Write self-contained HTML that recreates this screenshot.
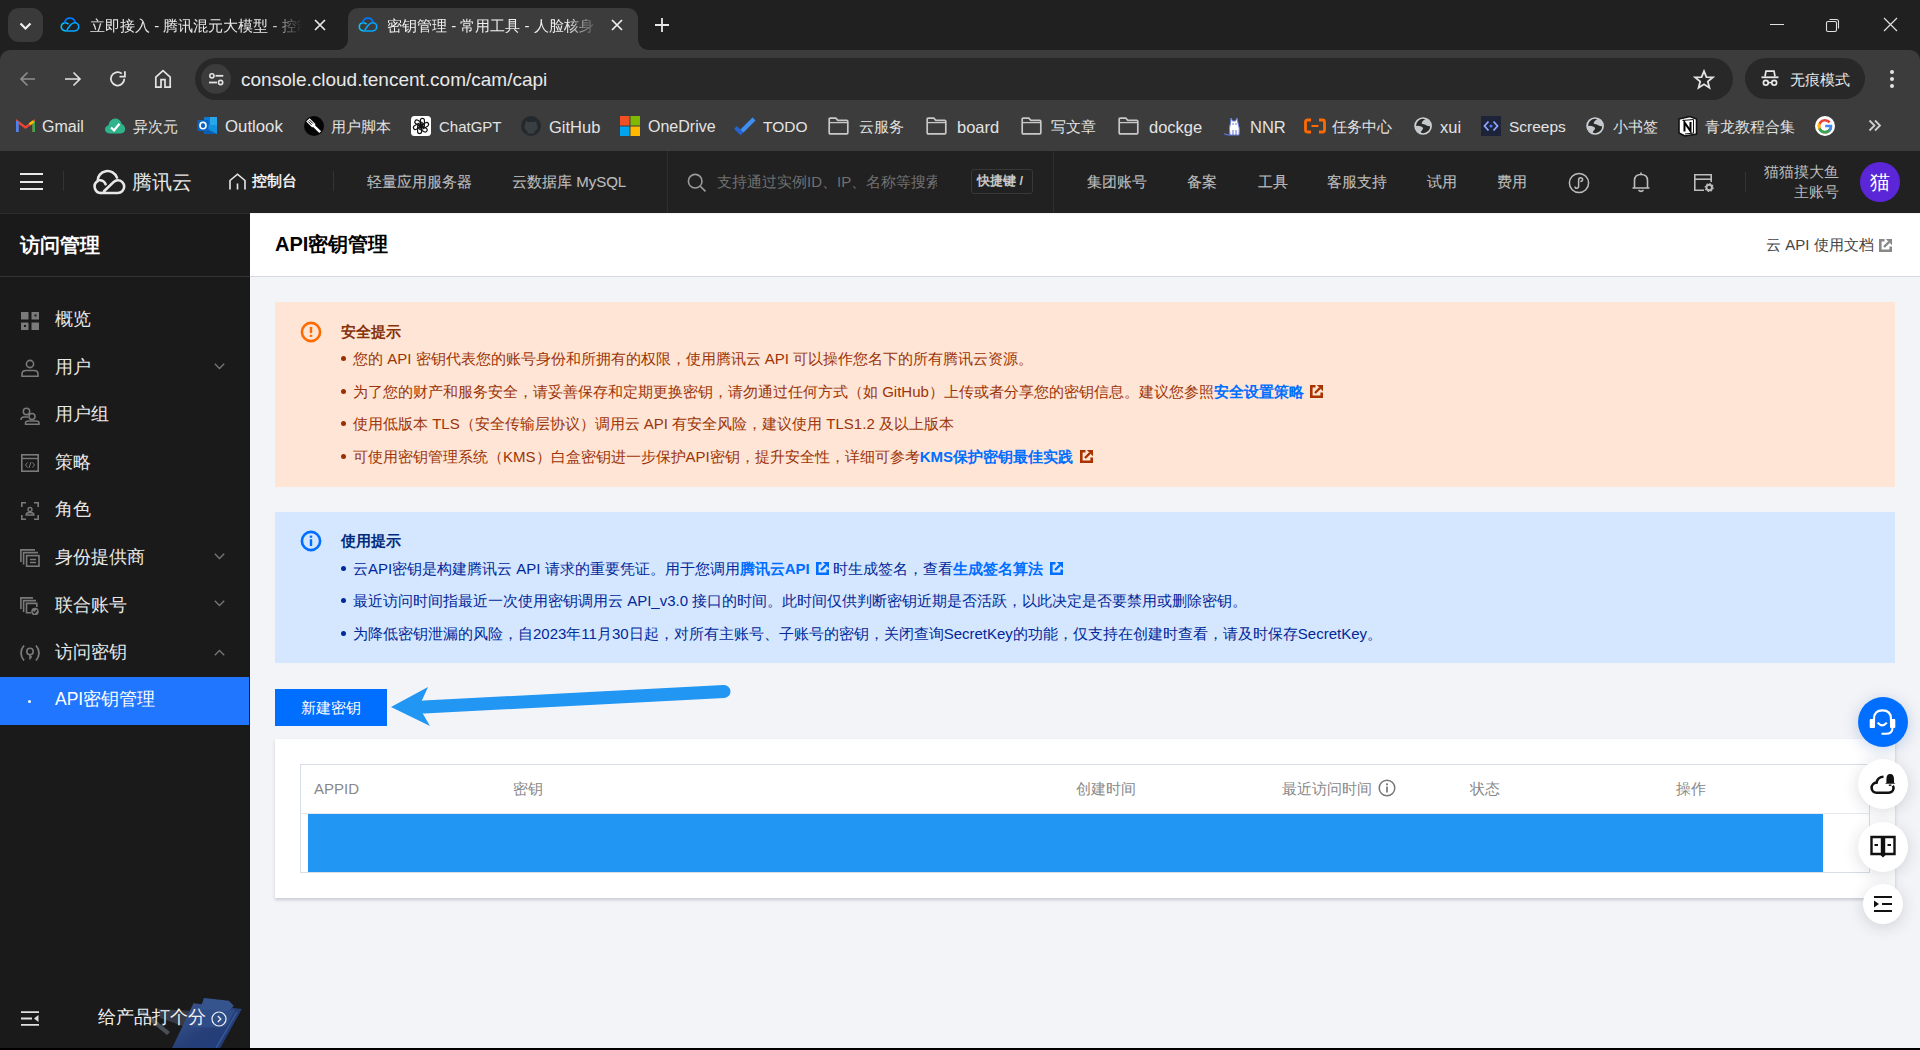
<!DOCTYPE html>
<html><head><meta charset="utf-8">
<style>
*{box-sizing:border-box;margin:0;padding:0}
html,body{width:1920px;height:1050px;overflow:hidden;background:#202020;font-family:"Liberation Sans",sans-serif}
.a{position:absolute}
.t{position:absolute;white-space:nowrap;line-height:1}
.bm{color:#e3e3e3;font-size:15px;top:119px}
.hn{color:#bcbcbc;font-size:15px;top:173.5px;-webkit-text-stroke:.12px #bcbcbc}
.mi{color:#e8e8e8;font-size:17.5px;left:55px}
.wt{color:#9c3408;font-size:15px;left:353px}
.it{color:#00289a;font-size:15px;left:353px}
.lk{color:#006eff;font-weight:bold}
.th{color:#888;font-size:15px;top:781px}
.fb{width:50px;height:50px;border-radius:50%;background:#fff;box-shadow:0 3px 16px rgba(30,40,60,.16)}
.wb{left:341px;width:5px;height:5px;border-radius:50%;background:#9a3000}
.ib{left:341px;width:5px;height:5px;border-radius:50%;background:#002a9a}
</style></head><body>
<!-- ===== browser tab strip ===== -->
<div class="a" style="left:0;top:0;width:1920px;height:50px;background:#202020"></div>
<div class="a" style="left:8px;top:8px;width:35px;height:34px;background:#3a3a3a;border-radius:11px"></div>
<svg class="a" style="left:17px;top:17px" width="17" height="17" viewBox="0 0 17 17"><path d="M3.5 6.5 L8.5 11.5 L13.5 6.5" fill="none" stroke="#f0f0f0" stroke-width="2.2"/></svg>
<!-- tab1 -->
<svg class="a" style="left:59px;top:16px" width="22" height="18" viewBox="-1 -.8 24 19.6"><path d="M6.5 15.5 C3.5 15.5 1.5 13.5 1.5 11 C1.5 8.5 3.5 6.5 6 6.5 C7.5 6.5 8.5 7.2 9.3 8" fill="none" stroke="#00c8ff" stroke-width="1.8"/><path d="M5 7 C5.5 3.5 8 1.5 11 1.5 C13.8 1.5 16 3.3 16.7 6" fill="none" stroke="#0077ff" stroke-width="1.8"/><path d="M6.5 15.5 L16 15.5 C18.5 15.5 20.5 13.5 20.5 11 C20.5 8.5 18.5 6.5 16 6.5 C14 6.5 12.8 7.5 11.5 9 L7.5 14.5" fill="none" stroke="#00a8ff" stroke-width="1.8"/></svg>
<div class="t" style="left:90px;top:18px;width:215px;overflow:hidden;font-size:15px;color:#e8e8e8;-webkit-mask-image:linear-gradient(90deg,#000 180px,transparent 212px)">立即接入 - 腾讯混元大模型 - 控制台</div>
<svg class="a" style="left:313px;top:18px" width="14" height="14" viewBox="0 0 14 14"><path d="M2 2L12 12M12 2L2 12" stroke="#e8e8e8" stroke-width="1.7"/></svg>
<!-- tab2 active -->
<div class="a" style="left:348px;top:8px;width:290px;height:42px;background:#3c3c3c;border-radius:10px 10px 0 0"></div>
<div class="a" style="left:338px;top:40px;width:10px;height:10px;background:radial-gradient(circle at 0 0,transparent 9.5px,#3c3c3c 10px)"></div>
<div class="a" style="left:638px;top:40px;width:10px;height:10px;background:radial-gradient(circle at 100% 0,transparent 9.5px,#3c3c3c 10px)"></div>
<svg class="a" style="left:357px;top:16px" width="22" height="18" viewBox="-1 -.8 24 19.6"><path d="M6.5 15.5 C3.5 15.5 1.5 13.5 1.5 11 C1.5 8.5 3.5 6.5 6 6.5 C7.5 6.5 8.5 7.2 9.3 8" fill="none" stroke="#00c8ff" stroke-width="1.8"/><path d="M5 7 C5.5 3.5 8 1.5 11 1.5 C13.8 1.5 16 3.3 16.7 6" fill="none" stroke="#0077ff" stroke-width="1.8"/><path d="M6.5 15.5 L16 15.5 C18.5 15.5 20.5 13.5 20.5 11 C20.5 8.5 18.5 6.5 16 6.5 C14 6.5 12.8 7.5 11.5 9 L7.5 14.5" fill="none" stroke="#00a8ff" stroke-width="1.8"/></svg>
<div class="t" style="left:387px;top:18px;width:215px;overflow:hidden;font-size:15px;color:#f0f0f0;-webkit-mask-image:linear-gradient(90deg,#000 180px,transparent 212px)">密钥管理 - 常用工具 - 人脸核身</div>
<svg class="a" style="left:610px;top:18px" width="14" height="14" viewBox="0 0 14 14"><path d="M2 2L12 12M12 2L2 12" stroke="#f0f0f0" stroke-width="1.7"/></svg>
<svg class="a" style="left:654px;top:17px" width="16" height="16" viewBox="0 0 16 16"><path d="M8 1V15M1 8H15" stroke="#e8e8e8" stroke-width="1.8"/></svg>
<!-- window controls -->
<div class="a" style="left:1770px;top:24px;width:14px;height:1px;background:#e0e0e0"></div>
<svg class="a" style="left:1825px;top:17px" width="16" height="16" viewBox="0 0 16 16"><rect x="1.5" y="4.5" width="10" height="10" rx="1.5" fill="none" stroke="#e0e0e0" stroke-width="1.1"/><path d="M4.5 2.5 H11.5 Q13.5 2.5 13.5 4.5 V11.5" fill="none" stroke="#e0e0e0" stroke-width="1.1"/></svg>
<svg class="a" style="left:1883px;top:17px" width="15" height="15" viewBox="0 0 15 15"><path d="M1 1L14 14M14 1L1 14" stroke="#e0e0e0" stroke-width="1.2"/></svg>

<!-- ===== toolbar + bookmarks ===== -->
<div class="a" style="left:0;top:50px;width:1920px;height:101px;background:#3c3c3c;border-radius:10px 10px 0 0"></div>
<svg class="a" style="left:18px;top:69px" width="20" height="20" viewBox="0 0 20 20"><path d="M17 10H3.5M9.5 3.5L3 10L9.5 16.5" fill="none" stroke="#8f8f8f" stroke-width="1.6"/></svg>
<svg class="a" style="left:63px;top:69px" width="20" height="20" viewBox="0 0 20 20"><path d="M2 10H16.5M10.5 3.5L17 10L10.5 16.5" fill="none" stroke="#e3e3e3" stroke-width="1.6"/></svg>
<svg class="a" style="left:108px;top:69px" width="20" height="20" viewBox="0 0 20 20"><path d="M16.3 9.8 A6.7 6.7 0 1 1 13.8 4.6" fill="none" stroke="#e3e3e3" stroke-width="1.8"/><path d="M16.9 2.2V7.6H11.5" fill="none" stroke="#e3e3e3" stroke-width="1.8"/></svg>
<svg class="a" style="left:153px;top:69px" width="20" height="20" viewBox="0 0 20 20"><path d="M2.8 18.2V8.2L10 1.6L17.2 8.2V18.2H12V10.6H8V18.2Z" fill="none" stroke="#e3e3e3" stroke-width="1.7" stroke-linejoin="miter"/></svg>
<div class="a" style="left:195px;top:58px;width:1538px;height:42px;background:#282828;border-radius:21px"></div>
<div class="a" style="left:201px;top:64px;width:30px;height:30px;background:#3c3c3c;border-radius:50%"></div>
<svg class="a" style="left:206px;top:69px" width="20" height="20" viewBox="0 0 20 20"><circle cx="5.9" cy="6.8" r="2.1" fill="none" stroke="#e3e3e3" stroke-width="1.6"/><path d="M9.5 6.8H17.3" stroke="#e3e3e3" stroke-width="1.8"/><circle cx="14.6" cy="13.5" r="2.1" fill="none" stroke="#e3e3e3" stroke-width="1.6"/><path d="M3 13.5H11" stroke="#e3e3e3" stroke-width="1.8"/></svg>
<div class="t" style="left:241px;top:70px;font-size:19px;color:#e8e8e8">console.cloud.tencent.com/cam/capi</div>
<svg class="a" style="left:1693px;top:69px" width="22" height="21" viewBox="0 0 22 21"><path d="M11 2.2L13.4 8.1L19.7 8.4L14.8 12.5L16.4 18.7L11 15.2L5.6 18.7L7.2 12.5L2.3 8.4L8.6 8.1Z" fill="none" stroke="#e3e3e3" stroke-width="1.8" stroke-linejoin="miter"/></svg>
<div class="a" style="left:1745px;top:58px;width:120px;height:41px;background:#282828;border-radius:21px"></div>
<svg class="a" style="left:1760px;top:68px" width="20" height="20" viewBox="0 0 20 20"><path d="M5 8.5L6 3.2H14L15 8.5" fill="none" stroke="#e8e8e8" stroke-width="1.7"/><path d="M1.5 9.3H18.5" stroke="#e8e8e8" stroke-width="1.8"/><circle cx="5.8" cy="14.8" r="2.4" fill="none" stroke="#e8e8e8" stroke-width="1.7"/><circle cx="14.2" cy="14.8" r="2.4" fill="none" stroke="#e8e8e8" stroke-width="1.7"/><path d="M8.2 14.6H11.8" stroke="#e8e8e8" stroke-width="1.5"/></svg>
<div class="t" style="left:1790px;top:72px;font-size:15px;color:#e8e8e8">无痕模式</div>
<div class="a" style="left:1890px;top:70px;width:4px;height:4px;border-radius:50%;background:#e3e3e3"></div>
<div class="a" style="left:1890px;top:77px;width:4px;height:4px;border-radius:50%;background:#e3e3e3"></div>
<div class="a" style="left:1890px;top:84px;width:4px;height:4px;border-radius:50%;background:#e3e3e3"></div>
<!-- bookmarks -->
<svg class="a" style="left:16px;top:118px" width="19" height="15" viewBox="0 0 19 15"><path d="M1.3 14V3.5L9.5 9.5L17.7 3.5V14" fill="none" stroke="#ea4335" stroke-width="2.6"/><path d="M1.3 14V3" stroke="#4285f4" stroke-width="2.6"/><path d="M17.7 14V3" stroke="#34a853" stroke-width="2.6"/><path d="M17.7 3.2L13.5 6.3" stroke="#fbbc04" stroke-width="2.6"/></svg>
<div class="t bm" style="left:42px;font-size:16px;top:119px">Gmail</div>
<svg class="a" style="left:104px;top:117px" width="22" height="18" viewBox="0 0 22 18"><path d="M5.5 16.5C2.8 16.5 1 14.6 1 12.3C1 10.2 2.6 8.5 4.6 8.2C5 4.5 7.8 1.5 11.3 1.5C14.6 1.5 17.3 4 17.8 7.3C19.9 7.7 21.2 9.8 21.2 12.1C21.2 14.6 19.3 16.5 16.7 16.5Z" fill="#2fb38a"/><path d="M7 10.5L10 13.3L15.5 6.8" fill="none" stroke="#fff" stroke-width="2.2"/></svg>
<div class="t bm" style="left:133px">异次元</div>
<svg class="a" style="left:197px;top:116px" width="21" height="20" viewBox="0 0 21 20"><rect x="7" y="1" width="13" height="17" rx="1" fill="#0f78d4"/><rect x="13" y="1" width="7" height="8" fill="#28a8ea"/><path d="M7 9L20 9V18H7Z" fill="#1490df"/><path d="M6 11L20 18H7Z" fill="#0a5fb0"/><rect x="0.5" y="4" width="11" height="11" rx="1" fill="#0a64c0"/><ellipse cx="6" cy="9.5" rx="3" ry="3.3" fill="none" stroke="#fff" stroke-width="1.6"/></svg>
<div class="t bm" style="left:225px;font-size:16.8px;top:119px">Outlook</div>
<svg class="a" style="left:304px;top:116px" width="20" height="20" viewBox="0 0 20 20"><circle cx="10" cy="10" r="10" fill="#050505"/><path d="M2.2 5.6L5.6 2.2L11.6 8.2L8.2 11.6Z" fill="#fff"/><path d="M4.2 5.4L7.6 8.8M5.5 4.1L8.9 7.5" stroke="#050505" stroke-width="1"/><path d="M9.3 9.3L16.2 16.2" stroke="#fff" stroke-width="2.6"/></svg>
<div class="t bm" style="left:331px">用户脚本</div>
<svg class="a" style="left:411px;top:116px" width="20" height="20" viewBox="0 0 20 20"><rect width="20" height="20" rx="3.5" fill="#fff"/><g fill="none" stroke="#111" stroke-width="1.15"><rect x="9.4" y="2.4" width="4" height="9" rx="2" transform="rotate(0 10 10)"/><rect x="9.4" y="2.4" width="4" height="9" rx="2" transform="rotate(60 10 10)"/><rect x="9.4" y="2.4" width="4" height="9" rx="2" transform="rotate(120 10 10)"/><rect x="9.4" y="2.4" width="4" height="9" rx="2" transform="rotate(180 10 10)"/><rect x="9.4" y="2.4" width="4" height="9" rx="2" transform="rotate(240 10 10)"/><rect x="9.4" y="2.4" width="4" height="9" rx="2" transform="rotate(300 10 10)"/></g></svg>
<div class="t bm" style="left:439px;font-size:15px;top:119px">ChatGPT</div>
<svg class="a" style="left:521px;top:116px" width="20" height="20" viewBox="0 0 20 20"><circle cx="10" cy="10" r="10" fill="#24292e"/><path d="M6.5 17.5V15C4.5 14.6 3.5 13 3.5 10.6C3.5 9.5 3.9 8.6 4.5 7.9C4.3 7.2 4.3 6.2 4.6 5.3C5.6 5.3 6.5 5.8 7.2 6.3C8.9 5.8 11.1 5.8 12.8 6.3C13.5 5.8 14.4 5.3 15.4 5.3C15.7 6.2 15.7 7.2 15.5 7.9C16.1 8.6 16.5 9.5 16.5 10.6C16.5 13 15.5 14.6 13.5 15V17.5Z" fill="#3a3f44"/></svg>
<div class="t bm" style="left:549px;font-size:16.5px;top:119px">GitHub</div>
<svg class="a" style="left:620px;top:116px" width="20" height="20" viewBox="0 0 20 20"><rect x="0" y="0" width="9.5" height="9.5" fill="#f25022"/><rect x="10.5" y="0" width="9.5" height="9.5" fill="#7fba00"/><rect x="0" y="10.5" width="9.5" height="9.5" fill="#00a4ef"/><rect x="10.5" y="10.5" width="9.5" height="9.5" fill="#ffb900"/></svg>
<div class="t bm" style="left:648px;font-size:16px;top:119px">OneDrive</div>
<svg class="a" style="left:734px;top:116px" width="22" height="20" viewBox="0 0 22 20"><path d="M1.5 11.5L6.5 16.5L20 3" fill="none" stroke="#2564cf" stroke-width="4"/><path d="M8 15L20 3" fill="none" stroke="#3f8ef0" stroke-width="4"/></svg>
<div class="t bm" style="left:763px;font-size:15.5px;top:119px">TODO</div>
<svg class="a" style="left:828px;top:117px" width="21" height="18" viewBox="0 0 21 18"><path d="M1.2 2.2Q1.2 1.2 2.2 1.2H7.8L9.8 3.4H18.8Q19.8 3.4 19.8 4.4V15.8Q19.8 16.8 18.8 16.8H2.2Q1.2 16.8 1.2 15.8Z" fill="none" stroke="#c8c8c8" stroke-width="1.7"/><path d="M1.2 5.6H19.8" stroke="#c8c8c8" stroke-width="1.3"/></svg>
<div class="t bm" style="left:859px">云服务</div>
<svg class="a" style="left:926px;top:117px" width="21" height="18" viewBox="0 0 21 18"><path d="M1.2 2.2Q1.2 1.2 2.2 1.2H7.8L9.8 3.4H18.8Q19.8 3.4 19.8 4.4V15.8Q19.8 16.8 18.8 16.8H2.2Q1.2 16.8 1.2 15.8Z" fill="none" stroke="#c8c8c8" stroke-width="1.7"/><path d="M1.2 5.6H19.8" stroke="#c8c8c8" stroke-width="1.3"/></svg>
<div class="t bm" style="left:957px;font-size:16.5px;top:119px">board</div>
<svg class="a" style="left:1021px;top:117px" width="21" height="18" viewBox="0 0 21 18"><path d="M1.2 2.2Q1.2 1.2 2.2 1.2H7.8L9.8 3.4H18.8Q19.8 3.4 19.8 4.4V15.8Q19.8 16.8 18.8 16.8H2.2Q1.2 16.8 1.2 15.8Z" fill="none" stroke="#c8c8c8" stroke-width="1.7"/><path d="M1.2 5.6H19.8" stroke="#c8c8c8" stroke-width="1.3"/></svg>
<div class="t bm" style="left:1051px">写文章</div>
<svg class="a" style="left:1118px;top:117px" width="21" height="18" viewBox="0 0 21 18"><path d="M1.2 2.2Q1.2 1.2 2.2 1.2H7.8L9.8 3.4H18.8Q19.8 3.4 19.8 4.4V15.8Q19.8 16.8 18.8 16.8H2.2Q1.2 16.8 1.2 15.8Z" fill="none" stroke="#c8c8c8" stroke-width="1.7"/><path d="M1.2 5.6H19.8" stroke="#c8c8c8" stroke-width="1.3"/></svg>
<div class="t bm" style="left:1149px;font-size:16.5px;top:119px">dockge</div>
<svg class="a" style="left:1223px;top:116px" width="20" height="20" viewBox="0 0 20 20"><path d="M8 2L9.5 5H12.5L14 2L15 7Q17 12 16 19H7Q5.5 12 7.5 7Z" fill="#fff" stroke="#6a7fe0" stroke-width="1"/><path d="M7 19Q3 19 1 17.5" fill="none" stroke="#5a6fd8" stroke-width="1.4"/><circle cx="10" cy="8" r=".8" fill="#5a6fd8"/><circle cx="13" cy="8" r=".8" fill="#5a6fd8"/><path d="M10 14V19M13 14V19" stroke="#5a6fd8" stroke-width="1"/></svg>
<div class="t bm" style="left:1250px;font-size:16.5px;top:119px">NNR</div>
<svg class="a" style="left:1304px;top:116px" width="22" height="20" viewBox="0 0 22 20"><path d="M7 4H3.5Q1.5 4 1.5 6V14Q1.5 16 3.5 16H7M15 4H18.5Q20.5 4 20.5 6V14Q20.5 16 18.5 16H15" fill="none" stroke="#ff6a00" stroke-width="2.8"/><path d="M7.5 10H14.5" stroke="#ff6a00" stroke-width="2"/></svg>
<div class="t bm" style="left:1332px">任务中心</div>
<svg class="a" style="left:1413px;top:116px" width="20" height="20" viewBox="0 0 20 20"><circle cx="10.1" cy="10" r="8" fill="#2a2a2a" stroke="#cdd0d4" stroke-width="1.7"/><path d="M13.9 2.5Q10 3.5 8.5 7.2Q9 8.3 11.9 8.5Q13.5 9.9 17.6 10.4Q18.5 5 13.9 2.5Z" fill="#c4c7cc"/><path d="M2.3 9.9Q6 9.6 8.2 10.4Q10.3 11.5 10.1 12.6Q9.5 14.1 8.2 15.2Q7.7 16 7.9 17.6Q2.5 16 2.3 9.9Z" fill="#c4c7cc"/></svg>
<div class="t bm" style="left:1440px;font-size:16.5px;top:119px">xui</div>
<svg class="a" style="left:1481px;top:116px" width="20" height="20" viewBox="0 0 20 20"><rect width="20" height="20" fill="#1d2338"/><path d="M7.5 5.5L3.5 10L7.5 14.5M12.5 5.5L16.5 10L12.5 14.5" fill="none" stroke="#8fa7ff" stroke-width="1.8"/><circle cx="10" cy="10" r="1.6" fill="#4d7cff"/></svg>
<div class="t bm" style="left:1509px;font-size:15.5px;top:119px">Screeps</div>
<svg class="a" style="left:1585px;top:116px" width="20" height="20" viewBox="0 0 20 20"><circle cx="10.1" cy="10" r="8" fill="#2a2a2a" stroke="#cdd0d4" stroke-width="1.7"/><path d="M13.9 2.5Q10 3.5 8.5 7.2Q9 8.3 11.9 8.5Q13.5 9.9 17.6 10.4Q18.5 5 13.9 2.5Z" fill="#c4c7cc"/><path d="M2.3 9.9Q6 9.6 8.2 10.4Q10.3 11.5 10.1 12.6Q9.5 14.1 8.2 15.2Q7.7 16 7.9 17.6Q2.5 16 2.3 9.9Z" fill="#c4c7cc"/></svg>
<div class="t bm" style="left:1613px">小书签</div>
<svg class="a" style="left:1677px;top:115px" width="21" height="22" viewBox="0 0 21 22"><path d="M2 4L13 1.5L19.5 4V19L8 21L2 18Z" fill="#fff" stroke="#111" stroke-width="1.6"/><path d="M5.5 5.5L16.5 4.5V18L8 19" fill="none" stroke="#111" stroke-width="1"/><path d="M7.5 16.5V7.5L13.5 16V7" fill="none" stroke="#000" stroke-width="2"/></svg>
<div class="t bm" style="left:1705px">青龙教程合集</div>
<svg class="a" style="left:1815px;top:116px" width="20" height="20" viewBox="0 0 20 20"><circle cx="10" cy="10" r="10" fill="#fff"/><path d="M14.6 6.4A6 6 0 1 0 16 10.8" fill="none" stroke="#ea4335" stroke-width="2.6"/><path d="M4.3 12.2A6 6 0 0 0 15.4 12.6" fill="none" stroke="#34a853" stroke-width="2.6"/><path d="M4.3 7.6A6 6 0 0 0 4.3 12.4" fill="none" stroke="#fbbc04" stroke-width="2.6"/><path d="M10.2 10H16V11.2Q15.7 13.5 14 15" fill="none" stroke="#4285f4" stroke-width="2.4"/></svg>
<svg class="a" style="left:1868px;top:119px" width="14" height="13" viewBox="0 0 14 13"><path d="M1.5 1.5L6.5 6.5L1.5 11.5M7 1.5L12 6.5L7 11.5" fill="none" stroke="#cfcfcf" stroke-width="1.8"/></svg>
<!-- ===== TC header ===== -->
<div class="a" style="left:0;top:151px;width:1920px;height:62px;background:#212121"></div>
<div class="a" style="left:20px;top:173px;width:23px;height:2px;background:#e8e8e8"></div>
<div class="a" style="left:20px;top:180.5px;width:23px;height:2px;background:#e8e8e8"></div>
<div class="a" style="left:20px;top:188px;width:23px;height:2px;background:#e8e8e8"></div>
<div class="a" style="left:63px;top:171px;width:1px;height:20px;background:#333"></div>
<svg class="a" style="left:92px;top:169px" width="34" height="26" viewBox="0 0 34 26"><g fill="none" stroke="#e8e8e8" stroke-width="2.6" stroke-linecap="round"><path d="M9 24H25.8A6.4 6.4 0 0 0 25.8 11.2Q23.5 11.2 21.5 13.2L12 22.3"/><path d="M9 24A6.4 6.4 0 0 1 5.6 12.2A10 10 0 0 1 25 8.6"/><path d="M7.6 11.3A6.4 6.4 0 0 1 13.6 15.2"/></g></svg>
<div class="t" style="left:132px;top:172px;font-size:20px;color:#e8e8e8">腾讯云</div>
<svg class="a" style="left:228px;top:173px" width="19" height="17" viewBox="0 0 19 17"><path d="M2 16.5V7.5L9.5 1.2L17 7.5V16.5" fill="none" stroke="#e8e8e8" stroke-width="1.6"/><path d="M9.5 10.5V16.5" fill="none" stroke="#e8e8e8" stroke-width="1.6"/></svg>
<div class="t" style="left:252px;top:173px;font-size:15px;color:#fff;-webkit-text-stroke:.35px #fff">控制台</div>
<div class="a" style="left:333px;top:171px;width:1px;height:20px;background:#333"></div>
<div class="t hn" style="left:367px">轻量应用服务器</div>
<div class="t hn" style="left:512px">云数据库 MySQL</div>
<div class="a" style="left:667px;top:151px;width:1px;height:62px;background:#2e2e2e"></div>
<svg class="a" style="left:687px;top:173px" width="20" height="19" viewBox="0 0 20 19"><circle cx="8.2" cy="8.2" r="6.8" fill="none" stroke="#9a9a9a" stroke-width="1.6"/><path d="M13 13L18.5 18.3" stroke="#9a9a9a" stroke-width="1.7"/></svg>
<div class="t" style="left:717px;top:174px;font-size:15px;color:#707070;width:220px;overflow:hidden">支持通过实例ID、IP、名称等搜索资源</div>
<div class="a" style="left:971px;top:169px;width:62px;height:25px;border:1px solid #383838;border-radius:3px"></div>
<div class="t" style="left:977px;top:174px;font-size:13px;color:#c8c8c8;font-weight:bold">快捷键 /</div>
<div class="a" style="left:1053px;top:151px;width:1px;height:62px;background:#2e2e2e"></div>
<div class="t hn" style="left:1087px">集团账号</div>
<div class="t hn" style="left:1187px">备案</div>
<div class="t hn" style="left:1258px">工具</div>
<div class="t hn" style="left:1327px">客服支持</div>
<div class="t hn" style="left:1427px">试用</div>
<div class="t hn" style="left:1497px">费用</div>
<svg class="a" style="left:1568px;top:172px" width="22" height="22" viewBox="0 0 22 22"><circle cx="11" cy="11" r="9.6" fill="none" stroke="#bdbdbd" stroke-width="1.5"/><path d="M7 14.5Q7 16.3 8.8 16.3Q10.6 16.3 10.6 14.3V8.2Q10.6 5.8 12.6 5.8Q14.6 5.8 14.6 7.6Q14.6 9.6 12.3 9.6" fill="none" stroke="#bdbdbd" stroke-width="1.5"/></svg>
<svg class="a" style="left:1631px;top:171px" width="20" height="22" viewBox="0 0 20 22"><path d="M3.5 17V9.5Q3.5 3.5 10 3.5Q16.5 3.5 16.5 9.5V17ZM1.5 17H18.5" fill="none" stroke="#bdbdbd" stroke-width="1.6"/><path d="M10 1.5V3.5" stroke="#bdbdbd" stroke-width="1.6"/><path d="M7.5 19.2Q10 21.5 12.5 19.2" fill="none" stroke="#bdbdbd" stroke-width="1.6"/></svg>
<svg class="a" style="left:1693px;top:173px" width="22" height="19" viewBox="0 0 22 19"><path d="M11 17.2H1.8V1.8H18.2V9" fill="none" stroke="#bdbdbd" stroke-width="1.6"/><path d="M1.8 6.2H18.2" stroke="#bdbdbd" stroke-width="1.6"/><circle cx="16.2" cy="14.5" r="2.8" fill="none" stroke="#bdbdbd" stroke-width="2"/><circle cx="16.2" cy="14.5" r="4" fill="none" stroke="#bdbdbd" stroke-width="1.2" stroke-dasharray="1.5 1.6"/></svg>
<div class="a" style="left:1745px;top:172px;width:1px;height:20px;background:#333"></div>
<div class="t" style="left:1764px;top:164px;font-size:15px;color:#bdbdbd">猫猫摸大鱼</div>
<div class="t" style="left:1794px;top:184px;font-size:15px;color:#bdbdbd">主账号</div>
<div class="a" style="left:1860px;top:162px;width:40px;height:40px;border-radius:50%;background:#5a26d8"></div>
<div class="t" style="left:1870px;top:172px;font-size:20px;color:#fff">猫</div>
<!-- ===== sidebar ===== -->
<div class="a" style="left:0;top:213px;width:250px;height:835px;background:#1a1a1a;border-top:1px solid #2c2c2c"></div>
<div class="t" style="left:20px;top:235px;font-size:20px;color:#fff;font-weight:bold">访问管理</div>
<div class="a" style="left:0;top:276px;width:250px;height:1px;background:#333"></div>
<!-- icons -->
<svg class="a" style="left:21px;top:312px" width="18" height="18" viewBox="0 0 18 18"><rect x="0" y="0" width="7.5" height="7.5" fill="#7a7a7a"/><rect x="10.5" y="0" width="7.5" height="7.5" fill="#7a7a7a"/><rect x="0" y="10.5" width="7.5" height="7.5" fill="#7a7a7a"/><rect x="10.5" y="10.5" width="7.5" height="7.5" fill="#7a7a7a"/><rect x="3" y="13" width="2" height="2" fill="#1a1a1a"/><rect x="13.5" y="2.5" width="2" height="2" fill="#1a1a1a"/></svg>
<div class="t mi" style="top:311px">概览</div>
<svg class="a" style="left:21px;top:359px" width="18" height="18" viewBox="0 0 18 18"><circle cx="9" cy="5" r="3.6" fill="none" stroke="#7a7a7a" stroke-width="1.6"/><path d="M1 17.2V15Q1 11.5 5 11.5H13Q17 11.5 17 15V17.2Z" fill="none" stroke="#7a7a7a" stroke-width="1.6"/></svg>
<div class="t mi" style="top:359px">用户</div>
<svg class="a" style="left:214px;top:363px" width="11" height="7" viewBox="0 0 11 7"><path d="M.8 .8L5.5 5.5L10.2 .8" fill="none" stroke="#777" stroke-width="1.3"/></svg>
<svg class="a" style="left:20px;top:407px" width="20" height="18" viewBox="0 0 20 18"><circle cx="6.5" cy="4.5" r="3.2" fill="none" stroke="#7a7a7a" stroke-width="1.5"/><path d="M1 13Q1 10 4 10H8" fill="none" stroke="#7a7a7a" stroke-width="1.5"/><circle cx="12" cy="9.5" r="3" fill="none" stroke="#7a7a7a" stroke-width="1.5"/><path d="M5.5 17.2V16Q5.5 14 8.5 14H16Q19 14 19 16V17.2Z" fill="none" stroke="#7a7a7a" stroke-width="1.5"/></svg>
<div class="t mi" style="top:406px">用户组</div>
<svg class="a" style="left:21px;top:454px" width="18" height="18" viewBox="0 0 18 18"><rect x=".8" y=".8" width="16.4" height="16.4" fill="none" stroke="#7a7a7a" stroke-width="1.6"/><path d="M.8 4.5H17.2" stroke="#7a7a7a" stroke-width="1.4"/><path d="M6.5 8.5L4.5 11L6.5 13.5M11.5 8.5L13.5 11L11.5 13.5M10 8L8 14" fill="none" stroke="#7a7a7a" stroke-width="1"/></svg>
<div class="t mi" style="top:454px">策略</div>
<svg class="a" style="left:21px;top:502px" width="18" height="18" viewBox="0 0 18 18"><path d="M.8 5V.8H5M13 .8H17.2V5M17.2 13V17.2H13M5 17.2H.8V13" fill="none" stroke="#7a7a7a" stroke-width="1.6"/><circle cx="9" cy="7.5" r="2" fill="none" stroke="#7a7a7a" stroke-width="1.3"/><path d="M5 13Q5 10.5 9 10.5Q13 10.5 13 13Z" fill="none" stroke="#7a7a7a" stroke-width="1.3"/></svg>
<div class="t mi" style="top:501px">角色</div>
<svg class="a" style="left:20px;top:549px" width="20" height="18" viewBox="0 0 20 18"><path d="M.9 13V.9H15" fill="none" stroke="#7a7a7a" stroke-width="1.6"/><path d="M3.6 15.5V3.6H18" fill="none" stroke="#7a7a7a" stroke-width="1.6"/><rect x="6.6" y="6.6" width="12.4" height="10.6" fill="none" stroke="#7a7a7a" stroke-width="1.6"/><path d="M10 10.5H16M10 13.5H16" stroke="#7a7a7a" stroke-width="1.4"/></svg>
<div class="t mi" style="top:549px">身份提供商</div>
<svg class="a" style="left:214px;top:553px" width="11" height="7" viewBox="0 0 11 7"><path d="M.8 .8L5.5 5.5L10.2 .8" fill="none" stroke="#777" stroke-width="1.3"/></svg>
<svg class="a" style="left:20px;top:597px" width="20" height="18" viewBox="0 0 20 18"><path d="M.9 12V.9H13" fill="none" stroke="#7a7a7a" stroke-width="1.6"/><path d="M3.6 15V3.6H16" fill="none" stroke="#7a7a7a" stroke-width="1.6"/><path d="M11 15.8H6.5V6.4H16.8V10" fill="none" stroke="#7a7a7a" stroke-width="1.6"/><circle cx="15" cy="14.5" r="3.8" fill="#7a7a7a"/><path d="M13 14.5L14.5 16L17 13" fill="none" stroke="#1a1a1a" stroke-width="1.2"/></svg>
<div class="t mi" style="top:597px">联合账号</div>
<svg class="a" style="left:214px;top:600px" width="11" height="7" viewBox="0 0 11 7"><path d="M.8 .8L5.5 5.5L10.2 .8" fill="none" stroke="#777" stroke-width="1.3"/></svg>
<svg class="a" style="left:20px;top:644px" width="20" height="18" viewBox="0 0 20 18"><path d="M4 1.5Q1 5 1 9Q1 13 4 16.5M16 1.5Q19 5 19 9Q19 13 16 16.5" fill="none" stroke="#7a7a7a" stroke-width="1.8"/><circle cx="10" cy="7.5" r="3.2" fill="none" stroke="#7a7a7a" stroke-width="1.6"/><path d="M10 10.5V15.5M10 13H12" stroke="#7a7a7a" stroke-width="1.6"/></svg>
<div class="t mi" style="top:644px">访问密钥</div>
<svg class="a" style="left:214px;top:649px" width="11" height="7" viewBox="0 0 11 7"><path d="M.8 6.2L5.5 1.5L10.2 6.2" fill="none" stroke="#777" stroke-width="1.3"/></svg>
<div class="a" style="left:0;top:677px;width:249px;height:48px;background:#2176ff"></div>
<div class="a" style="left:28px;top:700px;width:3px;height:3px;border-radius:50%;background:#fff"></div>
<div class="t mi" style="top:691px;color:#fff">API密钥管理</div>
<!-- bottom -->
<svg class="a" style="left:120px;top:990px" width="130" height="58" viewBox="0 0 130 58"><defs><linearGradient id="cg" x1="0" y1="0" x2="1" y2="1"><stop offset="0" stop-color="#3f5b92"/><stop offset=".55" stop-color="#263f78"/><stop offset="1" stop-color="#1f3c7c"/></linearGradient></defs><path d="M38 19L90 22L93 30L63 36L40 28Z" fill="#3a3f4a" opacity=".9"/><path d="M18 21.5L23 20L50 42L47 45Z" fill="#4a4e57"/><path d="M73.5 13.2L121.9 19L100.2 58H52.1Z" fill="url(#cg)"/><path d="M117 22L96 58" stroke="#3e5c9a" stroke-width="1.3"/><path d="M80 19.6L115 20L107 35Q105 37.5 101 37.5H70Z" fill="#2f4d88"/><path d="M84 8.1L109 10.8L113.8 15.9L108.3 21L79.9 19.6Z" fill="#35548e"/></svg>
<svg class="a" style="left:21px;top:1011px" width="18" height="15" viewBox="0 0 18 15"><path d="M0 1.2H18M0 7.5H11M0 13.8H18" stroke="#e0e0e0" stroke-width="1.8"/><path d="M17.5 4L13 7.5L17.5 11Z" fill="#e0e0e0"/></svg>
<div class="t" style="left:98px;top:1009px;font-size:17.5px;color:#f0f0f0">给产品打个分</div>
<svg class="a" style="left:211px;top:1011px" width="16" height="16" viewBox="0 0 16 16"><circle cx="8" cy="8" r="7" fill="none" stroke="#f0f0f0" stroke-width="1.2"/><path d="M6.8 5L9.8 8L6.8 11" fill="none" stroke="#f0f0f0" stroke-width="1.3"/></svg>
<!-- ===== main ===== -->
<div class="a" style="left:250px;top:213px;width:1670px;height:835px;background:#f3f4f7"></div>
<div class="a" style="left:250px;top:214px;width:1670px;height:63px;background:#fff;border-bottom:1px solid #d5dbe4"></div>
<div class="t" style="left:275px;top:233.5px;font-size:20px;color:#000;font-weight:bold">API密钥管理</div>
<div class="t" style="left:1766px;top:237px;font-size:15px;color:#444">云 API 使用文档</div>
<svg class="a" style="left:1879px;top:238.5px" width="13" height="13" viewBox="0 0 13 13"><path d="M5.5 1.3H1.3V11.7H11.7V7.5" fill="none" stroke="#888" stroke-width="2.6"/><path d="M5 8L10 3" stroke="#888" stroke-width="2.4"/><path d="M6.8 0H13V6.2Z" fill="#888"/></svg>

<!-- warning box -->
<div class="a" style="left:275px;top:302px;width:1620px;height:185px;background:#fee5d5"></div>
<svg class="a" style="left:300px;top:321px" width="22" height="22" viewBox="0 0 22 22"><circle cx="11" cy="11" r="9.1" fill="none" stroke="#ff6a00" stroke-width="2.6"/><rect x="9.8" y="5.9" width="2.4" height="6.2" fill="#ff6a00"/><rect x="9.8" y="13.8" width="2.4" height="2.1" fill="#ff6a00"/></svg>
<div class="t wt" style="left:341px;top:324px;font-weight:bold;color:#86320a">安全提示</div>
<div class="a wb" style="top:356px"></div><div class="t wt" style="top:351px">您的 API 密钥代表您的账号身份和所拥有的权限，使用腾讯云 API 可以操作您名下的所有腾讯云资源。</div>
<div class="a wb" style="top:389px"></div><div class="t wt" style="top:384px">为了您的财产和服务安全，请妥善保存和定期更换密钥，请勿通过任何方式（如 GitHub）上传或者分享您的密钥信息。建议您参照<span class="lk">安全设置策略</span><svg width="13" height="13" viewBox="0 0 13 13" style="vertical-align:-1px;margin-left:6.5px"><path d="M5.5 1.3H1.3V11.7H11.7V7.5" fill="none" stroke="#a83200" stroke-width="2.6"/><path d="M5 8L10 3" stroke="#a83200" stroke-width="2.4"/><path d="M6.8 0H13V6.2Z" fill="#a83200"/></svg></div>
<div class="a wb" style="top:421px"></div><div class="t wt" style="top:416px">使用低版本 TLS（安全传输层协议）调用云 API 有安全风险，建议使用 TLS1.2 及以上版本</div>
<div class="a wb" style="top:454px"></div><div class="t wt" style="top:449px">可使用密钥管理系统（KMS）白盒密钥进一步保护API密钥，提升安全性，详细可参考<span class="lk">KMS保护密钥最佳实践</span><svg width="13" height="13" viewBox="0 0 13 13" style="vertical-align:-1px;margin-left:6.5px"><path d="M5.5 1.3H1.3V11.7H11.7V7.5" fill="none" stroke="#a83200" stroke-width="2.6"/><path d="M5 8L10 3" stroke="#a83200" stroke-width="2.4"/><path d="M6.8 0H13V6.2Z" fill="#a83200"/></svg></div>

<!-- info box -->
<div class="a" style="left:275px;top:512px;width:1620px;height:151px;background:#d5e7ff"></div>
<svg class="a" style="left:300px;top:530px" width="22" height="22" viewBox="0 0 22 22"><circle cx="11" cy="11" r="9.1" fill="none" stroke="#006eff" stroke-width="2.6"/><rect x="9.8" y="5.6" width="2.4" height="2.2" fill="#006eff"/><rect x="9.8" y="9.2" width="2.4" height="6.8" fill="#006eff"/></svg>
<div class="t it" style="left:341px;top:533px;font-weight:bold;color:#002a7c">使用提示</div>
<div class="a ib" style="top:566px"></div><div class="t it" style="top:561px">云API密钥是构建腾讯云 API 请求的重要凭证。用于您调用<span class="lk">腾讯云API</span><svg width="13" height="13" viewBox="0 0 13 13" style="vertical-align:-1px;margin-left:6.5px"><path d="M5.5 1.3H1.3V11.7H11.7V7.5" fill="none" stroke="#006eff" stroke-width="2.6"/><path d="M5 8L10 3" stroke="#006eff" stroke-width="2.4"/><path d="M6.8 0H13V6.2Z" fill="#006eff"/></svg> 时生成签名，查看<span class="lk">生成签名算法</span><svg width="13" height="13" viewBox="0 0 13 13" style="vertical-align:-1px;margin-left:6.5px"><path d="M5.5 1.3H1.3V11.7H11.7V7.5" fill="none" stroke="#006eff" stroke-width="2.6"/><path d="M5 8L10 3" stroke="#006eff" stroke-width="2.4"/><path d="M6.8 0H13V6.2Z" fill="#006eff"/></svg></div>
<div class="a ib" style="top:598px"></div><div class="t it" style="top:593px">最近访问时间指最近一次使用密钥调用云 API_v3.0 接口的时间。此时间仅供判断密钥近期是否活跃，以此决定是否要禁用或删除密钥。</div>
<div class="a ib" style="top:631px"></div><div class="t it" style="top:626px">为降低密钥泄漏的风险，自2023年11月30日起，对所有主账号、子账号的密钥，关闭查询SecretKey的功能，仅支持在创建时查看，请及时保存SecretKey。</div>

<!-- button + arrow -->
<div class="a" style="left:275px;top:689px;width:112px;height:37px;background:#006eff"></div>
<div class="t" style="left:301px;top:700px;font-size:15px;color:#fff">新建密钥</div>
<svg class="a" style="left:385px;top:680px" width="355" height="52" viewBox="385 680 355 52"><path d="M424 707 L724 691.5" stroke="#2196f3" stroke-width="13" stroke-linecap="round"/><path d="M391 707 L428 687 L419 707 L430 726 Z" fill="#2196f3"/></svg>

<!-- table card -->
<div class="a" style="left:275px;top:739px;width:1620px;height:159px;background:#fff;box-shadow:0 2px 3px rgba(54,58,80,.22)"></div>
<div class="a" style="left:300px;top:764px;width:1570px;height:109px;border:1px solid #d9dde5"></div>
<div class="a" style="left:301px;top:813px;width:1568px;height:1px;background:#e5e8ee"></div>
<div class="t th" style="left:314px">APPID</div>
<div class="t th" style="left:513px">密钥</div>
<div class="t th" style="left:1076px">创建时间</div>
<div class="t th" style="left:1282px">最近访问时间</div>
<svg class="a" style="left:1378px;top:779px" width="18" height="18" viewBox="0 0 18 18"><circle cx="9" cy="9" r="7.8" fill="none" stroke="#777" stroke-width="1.5"/><circle cx="9" cy="5.3" r="1.1" fill="#777"/><path d="M9 7.5V13.5" stroke="#777" stroke-width="1.7"/></svg>
<div class="t th" style="left:1470px">状态</div>
<div class="t th" style="left:1676px">操作</div>
<div class="a" style="left:308px;top:814px;width:1515px;height:58px;background:#2196f3"></div>

<!-- floating buttons -->
<div class="a" style="left:1858px;top:697px;width:50px;height:50px;border-radius:50%;background:#006eff;box-shadow:0 3px 16px rgba(0,60,160,.22)"></div>
<svg class="a" style="left:1867px;top:707px" width="30" height="30" viewBox="0 0 30 30"><path d="M7 16V12Q7 3.4 15.5 3.4Q24 3.4 24 12V16" fill="none" stroke="#fff" stroke-width="2.2"/><rect x="2.7" y="11.9" width="5.3" height="9" rx="1" fill="#fff"/><rect x="23" y="11.9" width="5.3" height="9" rx="1" fill="#fff"/><path d="M10.7 15.6Q15.2 21 19.8 15.6" fill="none" stroke="#fff" stroke-width="2.2"/><path d="M25.5 20.5Q25.5 26.8 19 26.8H14.5" fill="none" stroke="#fff" stroke-width="2.1"/></svg>
<div class="a fb" style="left:1858px;top:759px"></div>
<svg class="a" style="left:1869px;top:772px" width="28" height="24" viewBox="0 0 28 24"><path d="M14.5 4.7C10.8 4.7 8 7.4 7.6 10.6C4.6 10.8 2.6 13.2 2.6 15.8C2.6 18.6 4.8 20.7 7.6 20.7H19.8C22.4 20.7 24.5 18.7 24.5 16.1C24.5 15.2 24.2 14.4 23.8 13.8" fill="none" stroke="#111" stroke-width="2.6"/><path d="M17.4 10.8V7.3Q17.4 2 21.2 2Q25 2 25 7.3V10.8L26.4 11.8H16Z" fill="#111"/><path d="M19.8 13.2H22.4" stroke="#111" stroke-width="1.4"/></svg>
<div class="a fb" style="left:1858px;top:822px"></div>
<svg class="a" style="left:1870px;top:834px" width="26" height="24" viewBox="0 0 26 24"><path d="M1.5 3H12V20H1.5ZM14 3H24.5V20H14Z" fill="none" stroke="#111" stroke-width="2.4"/><path d="M4.5 11H8M17.5 11H21" stroke="#111" stroke-width="2.2"/><path d="M10.5 20L13 22.5L15.5 20" fill="#111" stroke="#111" stroke-width="1.5"/></svg>
<div class="a fb" style="left:1863px;top:884px;width:40px;height:40px"></div>
<svg class="a" style="left:1873px;top:895px" width="20" height="18" viewBox="0 0 20 18"><path d="M1 2H19M9 9H19M1 16H19" stroke="#111" stroke-width="2"/><path d="M1 5.5L6 9L1 12.5Z" fill="#111"/></svg>
<!-- bottom black line -->
<div class="a" style="left:0;top:1048px;width:1920px;height:2px;background:#000"></div>
</body></html>
